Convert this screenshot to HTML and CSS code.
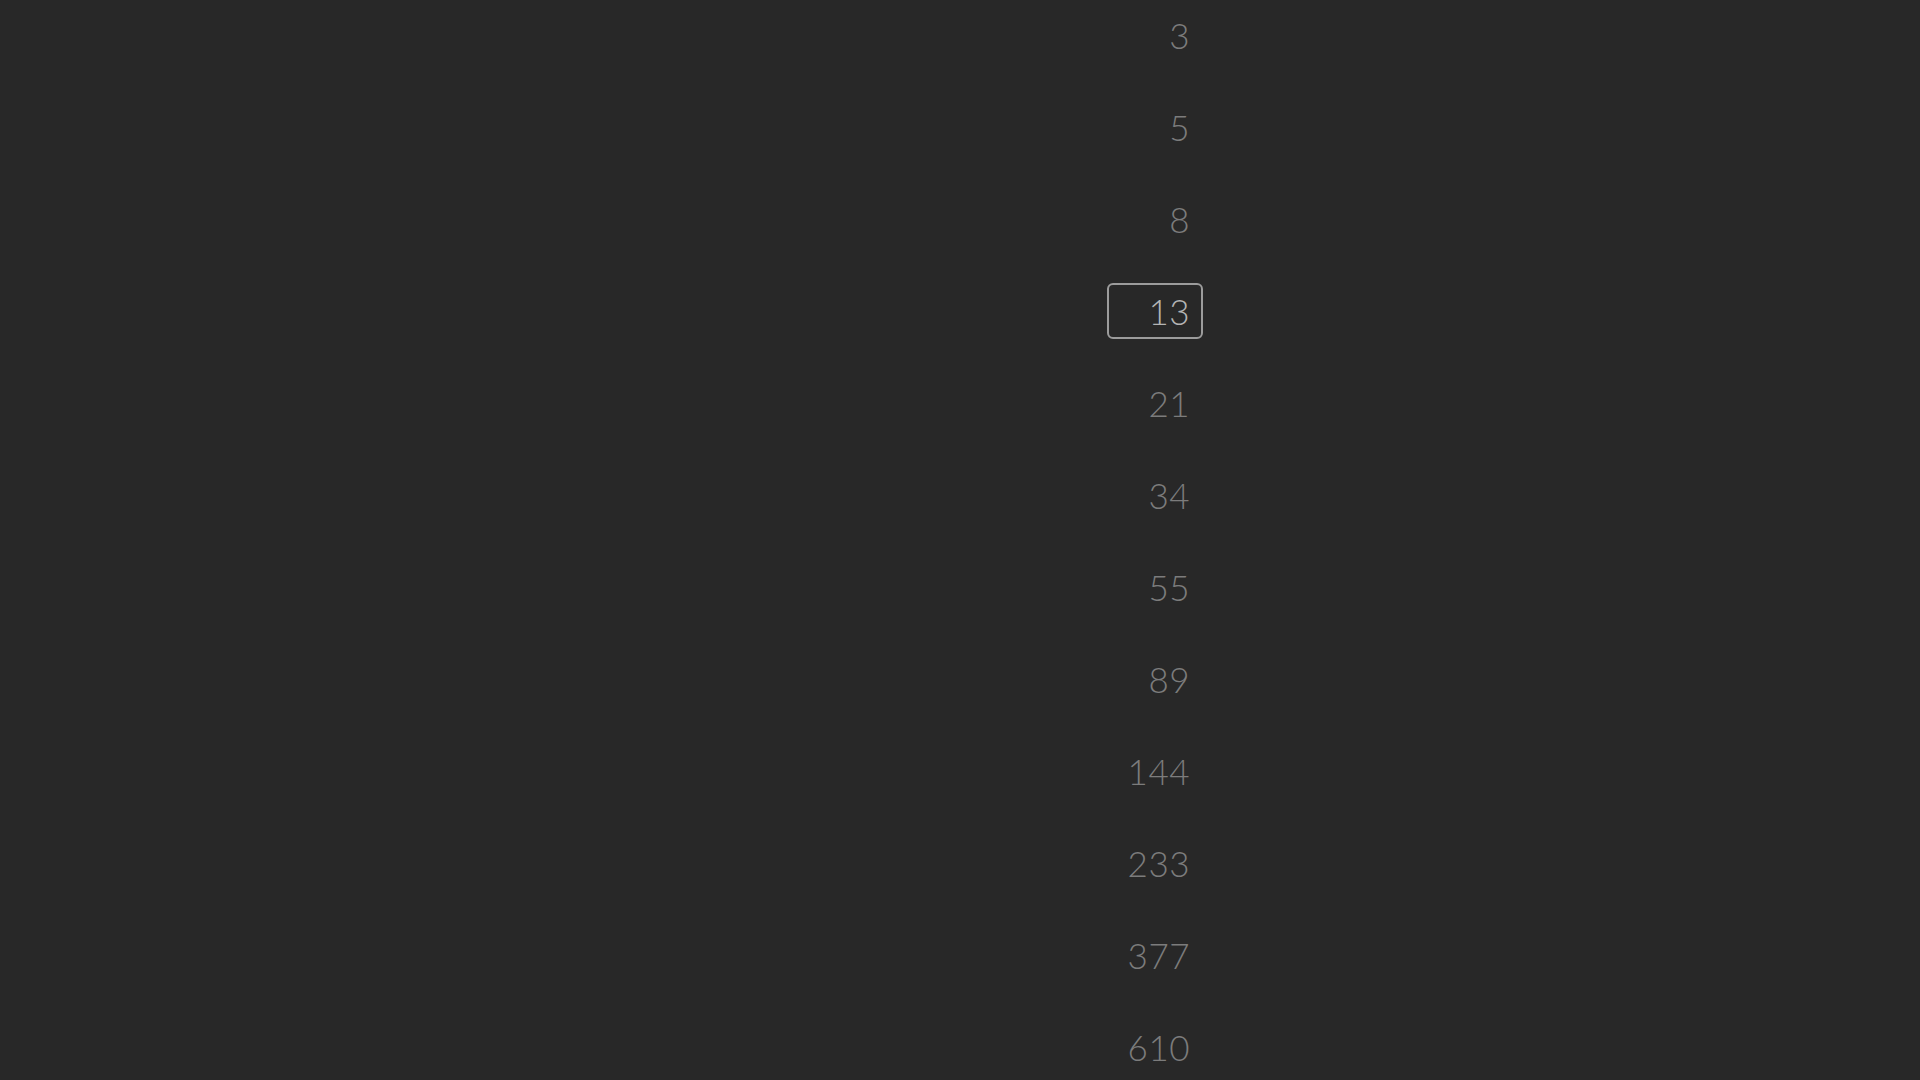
FILE: index.html
```html
<!DOCTYPE html>
<html>
<head>
<meta charset="utf-8">
<link rel="stylesheet" href="styles.css">
</head>
<body>
<div class="picker">
  <div class="item">3</div>
  <div class="item">5</div>
  <div class="item">8</div>
  <div class="item selected">13</div>
  <div class="item">21</div>
  <div class="item">34</div>
  <div class="item">55</div>
  <div class="item">89</div>
  <div class="item">144</div>
  <div class="item">233</div>
  <div class="item">377</div>
  <div class="item">610</div>
</div>
</body>
</html>
```
FILE: styles.css
```css
html, body {
  margin: 0;
  padding: 0;
  background: #282828;
  height: 100%;
  overflow: hidden;
}
.picker {
  width: 96px;
  margin-left: 1107px;
  padding-top: 7px;
  display: flex;
  flex-direction: column;
  gap: 36px;
}
.item {
  box-sizing: border-box;
  height: 56px;
  border: 2px solid transparent;
  border-radius: 6px;
  padding-right: 11px;
  text-align: right;
  font-family: Lato, "Liberation Sans", sans-serif;
  font-weight: 300;
  font-size: 35px;
  letter-spacing: 0.5px;
  line-height: 52px;
  color: #7c7c7c;
}
.item.selected {
  border-color: #9c9c9c;
  color: #b4b4b4;
}
```
